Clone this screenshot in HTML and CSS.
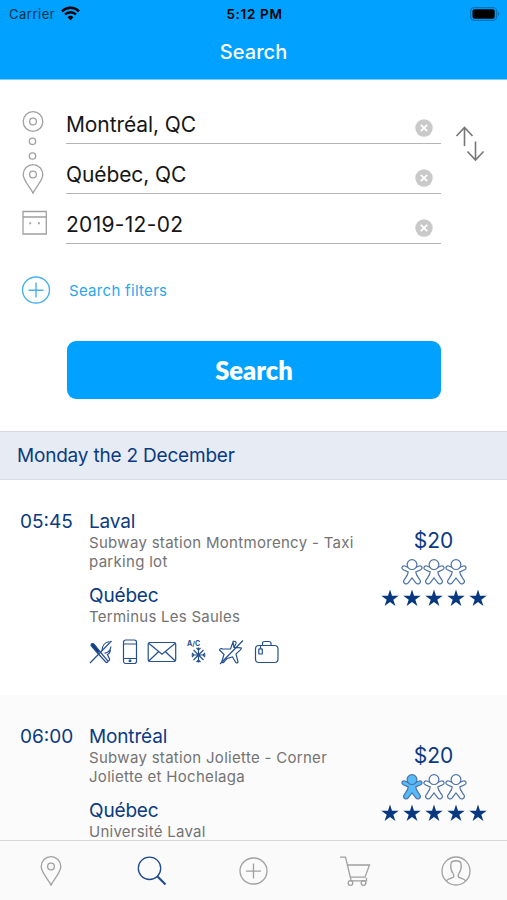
FILE: index.html
```html
<!DOCTYPE html>
<html lang="en">

<head>
    <meta charset="UTF-8">
    <meta name="viewport" content="width=device-width, initial-scale=1.0">
    <title>Search</title>
    <link rel="stylesheet" href="styles.css">
</head>

<body>
    <svg class="sprite" width="0" height="0">
        <symbol id="pin" viewBox="0 0 22 30">
            <path d="M11 29.2C9 24.500 1.200 16.500 1.200 10.500a9.800 9.800 0 0 1 19.600 0C20.800 16.500 13 24.500 11 29.200z" />
            <circle cx="11" cy="10.500" r="3.400" />
        </symbol>
        <symbol id="plus" viewBox="0 0 30 30">
            <ellipse cx="15" cy="15" rx="13.500" ry="13" />
            <path d="M15 7.500v15M7.500 15.200h15" />
        </symbol>
        <symbol id="person" viewBox="0 0 22 26">
            <path d="M7.500 8.500 3.800 7C.8 6.200 0 9.800 2.300 10.700L7.200 13C7.200 16 4.500 18.500 2.900 21.300 1.600 24.200 5.300 26.300 7.200 23.800L11 19l3.800 4.800c1.900 2.500 5.600 .4 4.300-2.500C17.500 18.500 14.800 16 14.800 13l4.900-2.300C22 9.800 21.200 6.200 18.200 7L14.500 8.500" />
            <circle cx="11" cy="5.600" r="4.900" />
        </symbol>
        <symbol id="star" viewBox="0 0 18 18">
            <path d="M9 .400l2 6.400h6.700l-5.400 3.900 2.100 6.300L9 13.100 3.600 17l2.100-6.300L.300 6.800H7z" />
        </symbol>
        <symbol id="clear" viewBox="0 0 18 18">
            <circle cx="9" cy="9" r="8.700" fill="#c9c9c9" />
            <path d="M5.800 5.800l6.400 6.400M12.200 5.800l-6.400 6.400" stroke="#fff" stroke-width="1.800" />
        </symbol>
    </svg>

    <header>
        <div class="status-bar">
            <div class="carrier">
                <span>Carrier</span>
                <svg width="19" height="15" viewBox="0 0 19 15" fill="none" stroke="#000">
                    <path d="M1 5.300a12.200 12.200 0 0 1 17 0" stroke-width="2.500" />
                    <path d="M4 8.500a7.800 7.800 0 0 1 11 0" stroke-width="2.300" />
                    <path d="M6.500 11.300a4.300 4.300 0 0 1 6 0L9.500 14.300z" fill="#000" stroke="none" />
                </svg>
            </div>
            <span class="clock">5:12 PM</span>
            <svg class="battery" width="30" height="14" viewBox="0 0 30 14">
                <rect x=".600" y=".600" width="26" height="12.800" rx="3.800" fill="none" stroke="#0873b8" stroke-width="1.300" />
                <rect x="2.500" y="2.300" width="22.200" height="9.400" rx="2" />
                <path d="M28 4.800q2.600 2.200 0 4.400z" fill="#0873b8" />
            </svg>
        </div>
        <h1>Search</h1>
    </header>

    <form>
        <svg class="route-icons line-icon" width="30" height="150" viewBox="0 0 30 150">
            <circle cx="13" cy="27.500" r="9.800" />
            <circle cx="13" cy="27.500" r="3.400" />
            <circle cx="12.500" cy="47.300" r="3.200" />
            <circle cx="12.500" cy="62" r="3.200" />
            <use href="#pin" x="2" y="70" width="22" height="30" />
            <path d="M3 117.500h23.300v22.500H3zM3 123h23.300" />
            <path d="M9.300 129.300h1.800M18 129.300h1.800" stroke-width="1.900" />
        </svg>
        <div class="fields">
            <div class="form-field">
                <span>Montréal, QC</span>
                <svg width="18" height="18"><use href="#clear" /></svg>
            </div>
            <div class="form-field">
                <span>Québec, QC</span>
                <svg width="18" height="18"><use href="#clear" /></svg>
            </div>
            <div class="form-field date">
                <span>2019-12-02</span>
                <svg width="18" height="18"><use href="#clear" /></svg>
            </div>
        </div>
        <svg class="swap" width="30" height="36" viewBox="0 0 30 36">
            <path d="M9.500 20V1.500M1.500 10l8-8.500 8 8.500M20.500 15.500v18.500M12.500 25.500l8 8.500 8-8.500" />
        </svg>
    </form>

    <div class="filters">
        <svg width="30" height="30"><use href="#plus" /></svg>
        <span>Search filters</span>
    </div>

    <button type="button">Search</button>

    <h2>Monday the 2 December</h2>

    <main>
        <div class="trip">
            <div class="time">05:45</div>
            <div class="stops">
                <h3>Laval</h3>
                <p>Subway station Montmorency - Taxi<br>parking lot</p>
                <h3>Québec</h3>
                <p>Terminus Les Saules</p>
                <div class="amenities">
                    <svg width="24" height="26" viewBox="0 0 24 26">
                        <path d="M1 24 22.500 2" />
                        <path d="M2 6.500c0-2 2-2.500 3.200-1.200l5.300 6.700-2 2z" fill="#0a3a82" />
                        <path d="M10.500 12l8 9.500c1 1.500-.500 2.700-1.700 1.500L8.500 14" />
                        <path d="M13 11.500c0-4 2.500-8 7.500-9M15.500 14c3 .500 6-2.500 6.500-6.500M21 10c1 2-.500 4.500-2.500 5.500l2 4.500c.5 2-1.500 2.500-2.200 1" />
                    </svg>
                    <svg width="16" height="26" viewBox="0 0 16 26">
                        <rect x="1.500" y="1" width="13" height="23.500" rx="2.200" />
                        <path d="M1.500 5h13M1.500 19.500h13" />
                        <circle cx="8" cy="21.800" r=".9" />
                    </svg>
                    <svg width="30" height="26" viewBox="0 0 30 26">
                        <rect x="1.200" y="3.500" width="27.500" height="19" rx="1.500" />
                        <path d="M2 4.500l13 10.800 13-10.800M2 21.800l9.500-9M28 21.800l-9.500-9" />
                    </svg>
                    <svg width="22" height="26" viewBox="0 0 22 26">
                        <text x="1" y="6.500">A/C</text>
                        <path d="M12.500 8.500v15M5.500 16h14M7.500 11l10 10M17.500 11l-10 10M10.500 9l2 2 2-2M10.500 23l2-2 2 2M6 14l2 2-2 2M19 14l-2 2 2 2" />
                    </svg>
                    <svg class="no-pets" width="26" height="26" viewBox="0 0 26 26">
                        <path d="M15 3l1 5.500c2.500.500 5-.500 7.500.500-.500 2.500-4 4-5.500 6l2 8c-.500 1.500-2 1-2.500 0L14.500 18 9 19.500l-3.500 4c-1 .500-2 0-1.500-1.500L6 15.500 1.500 11c0-1.500 1.500-1.500 3-1.200l8 .2z" />
                        <path d="M15 3c2-1.500 3.500-.500 3 1.500l-2 4M2 25 25 1.500" />
                    </svg>
                    <svg class="luggage" width="26" height="26" viewBox="0 0 26 26">
                        <rect x="1.500" y="6.500" width="22.500" height="17" rx="3.500" />
                        <path d="M8.500 6.300V4.500Q8.500 2.500 10.500 2.500h4.500q2 0 2 2v1.800M6.500 6.500v3" />
                        <rect x="4.800" y="9.800" width="3.500" height="5.200" rx=".6" />
                    </svg>
                </div>
            </div>
            <div class="offer">
                <div class="price">$20</div>
                <div class="seats">
                    <svg><use href="#person" /></svg>
                    <svg><use href="#person" /></svg>
                    <svg><use href="#person" /></svg>
                </div>
                <div class="stars">
                    <svg><use href="#star" /></svg>
                    <svg><use href="#star" /></svg>
                    <svg><use href="#star" /></svg>
                    <svg><use href="#star" /></svg>
                    <svg><use href="#star" /></svg>
                </div>
            </div>
        </div>

        <div class="trip alt">
            <div class="time">06:00</div>
            <div class="stops">
                <h3>Montréal</h3>
                <p>Subway station Joliette - Corner<br>Joliette et Hochelaga</p>
                <h3>Québec</h3>
                <p>Université Laval</p>
            </div>
            <div class="offer">
                <div class="price">$20</div>
                <div class="seats">
                    <svg class="taken"><use href="#person" /></svg>
                    <svg><use href="#person" /></svg>
                    <svg><use href="#person" /></svg>
                </div>
                <div class="stars">
                    <svg><use href="#star" /></svg>
                    <svg><use href="#star" /></svg>
                    <svg><use href="#star" /></svg>
                    <svg><use href="#star" /></svg>
                    <svg><use href="#star" /></svg>
                </div>
            </div>
        </div>
    </main>

    <nav class="line-icon">
        <a><svg width="22" height="30"><use href="#pin" /></svg></a>
        <a class="active">
            <svg width="30" height="30" viewBox="0 0 30 30">
                <circle cx="12.500" cy="12.300" r="11.200" />
                <path d="M20.500 20.500l8 8" stroke-width="2.200" />
            </svg>
        </a>
        <a><svg class="add" width="31" height="30"><use href="#plus" /></svg></a>
        <a>
            <svg width="32" height="30" viewBox="0 0 32 30">
                <path d="M1 1.200h5.500L12 24M8.800 9H30.500L26 21.200H11.500M11.500 24.800H27.500v-3" />
                <circle cx="11.500" cy="27" r="2.300" />
                <circle cx="24.500" cy="27" r="2.300" />
            </svg>
        </a>
        <a>
            <svg width="30" height="30" viewBox="0 0 30 30">
                <circle cx="15" cy="15" r="14" />
                <path d="M5.500 25c.500-2.500 5.500-2.500 7-4 .800-1 .300-2.500-.700-4C10 14.500 9.500 11.500 9.800 8.500 10.200 3.500 19.800 3.500 20.200 8.500c.300 3-.200 6-2 8.500-1 1.500-1.500 3-.700 4 1.500 1.500 6.500 1.500 7 4" />
            </svg>
        </a>
    </nav>
</body>

</html>
```

FILE: styles.css
```css
* {
    box-sizing: border-box;
}

body {
    margin: 0;
    height: 900px;
    display: flex;
    flex-direction: column;
    overflow: hidden;
    font-family: Inter, "Liberation Sans", sans-serif;
    color: #0a3a82;
    background-color: #ffffff;
}

h1,
h2,
h3,
p {
    margin: 0;
    font-weight: 400;
}

svg {
    display: block;
    flex: none;
}

.sprite {
    display: none;
}

.line-icon {
    fill: none;
    stroke: #a0a0a0;
    stroke-width: 1.3;
}

header {
    flex: none;
    height: 80px;
    background-color: #00a1ff;
    border-bottom: 1px solid #7fcdfb;
}

.status-bar {
    height: 27px;
    padding: 0 7px 0 9px;
    display: grid;
    grid-template-columns: 1fr auto 1fr;
    align-items: center;
    font-size: 13px;
    color: #000000;
}

.carrier {
    display: flex;
    align-items: center;
    gap: 6px;
    letter-spacing: 0.5px;
    color: #06304a;
}

.clock {
    font-size: 13.5px;
    font-weight: 600;
    letter-spacing: 0.65px;
}

.battery {
    justify-self: end;
}

h1 {
    line-height: 51px;
    text-align: center;
    font-size: 20px;
    font-weight: 500;
    letter-spacing: 0.1px;
    color: #ffffff;
}

form {
    flex: none;
    display: flex;
    height: 150px;
    margin-top: 14px;
    padding-left: 20px;
}

.fields {
    width: 375px;
    margin-left: 16px;
}

.form-field {
    display: flex;
    justify-content: space-between;
    align-items: center;
    height: 50px;
    padding: 11px 8px 0 0;
    border-bottom: 1px solid #b5b5b5;
    font-size: 21px;
    letter-spacing: -0.1px;
    color: #161616;
}

.form-field.date {
    letter-spacing: 0.3px;
}

.form-field svg {
    margin-top: 8px;
}

.swap {
    margin: 32px 0 0 14px;
    fill: none;
    stroke: #777777;
    stroke-width: 1.6;
}

.filters {
    flex: none;
    display: flex;
    align-items: center;
    gap: 18px;
    margin-top: 31px;
    padding-left: 21px;
    height: 30px;
    font-size: 15px;
    letter-spacing: 0.3px;
    color: #2ba6f0;
}

.filters svg {
    fill: none;
    stroke: #4ab1ef;
    stroke-width: 1.4;
}

button {
    flex: none;
    width: 374px;
    height: 58px;
    margin: 36px 0 32px 67px;
    border: none;
    border-radius: 9px;
    background-color: #00a1ff;
    color: #ffffff;
    font-family: Lato, sans-serif;
    font-size: 25.5px;
    font-weight: 800;
}

h2 {
    flex: none;
    height: 49px;
    padding-left: 17px;
    line-height: 48px;
    font-size: 19px;
    letter-spacing: -0.2px;
    background-color: #e7ecf4;
    border-top: 1px solid #d6dade;
    border-bottom: 1px solid #d9dde2;
}

main {
    flex: 1;
    min-height: 0;
    overflow: hidden;
}

.trip {
    display: flex;
    height: 215px;
    padding: 30px 19px 0 20px;
}

.trip.alt {
    background-color: #fbfbfb;
}

.time {
    width: 69px;
    line-height: 24px;
    font-size: 19px;
}

.stops {
    width: 290px;
}

h3 {
    line-height: 24px;
    font-size: 19px;
    letter-spacing: -0.15px;
}

.stops p {
    line-height: 18.5px;
    margin-bottom: 13px;
    font-size: 15px;
    letter-spacing: 0.3px;
    color: #737373;
}

.stops p:last-of-type {
    line-height: 17px;
    letter-spacing: 0.25px;
}

.amenities {
    display: flex;
    gap: 9px;
    margin-top: 14px;
    fill: none;
    stroke: #244f90;
    stroke-width: 1.2;
}

.amenities text {
    fill: #244f90;
    stroke: none;
    font-size: 7px;
    font-weight: 700;
    letter-spacing: 0;
}

.amenities .no-pets,
.amenities .luggage {
    margin-left: 1px;
}

.offer {
    display: flex;
    flex-direction: column;
    align-items: center;
    width: 109px;
    padding-top: 17px;
}

.price {
    line-height: 28px;
    font-size: 21px;
}

.seats {
    display: flex;
    margin-top: 4px;
    fill: #ffffff;
    stroke: #4a71a8;
    stroke-width: 1.2;
}

.seats svg {
    width: 22px;
    height: 26px;
}

.seats .taken {
    fill: #55baf5;
}

.stars {
    display: flex;
    gap: 4px;
    margin-top: 4px;
    fill: #06377f;
}

.stars svg {
    width: 18px;
    height: 18px;
}

nav {
    flex: none;
    display: flex;
    height: 60px;
    background-color: #fafafa;
    border-top: 1px solid #d8d8d8;
}

nav a {
    flex: 1;
    display: flex;
    justify-content: center;
    align-items: center;
}

nav .active {
    stroke: #1f4b8e;
}
```
